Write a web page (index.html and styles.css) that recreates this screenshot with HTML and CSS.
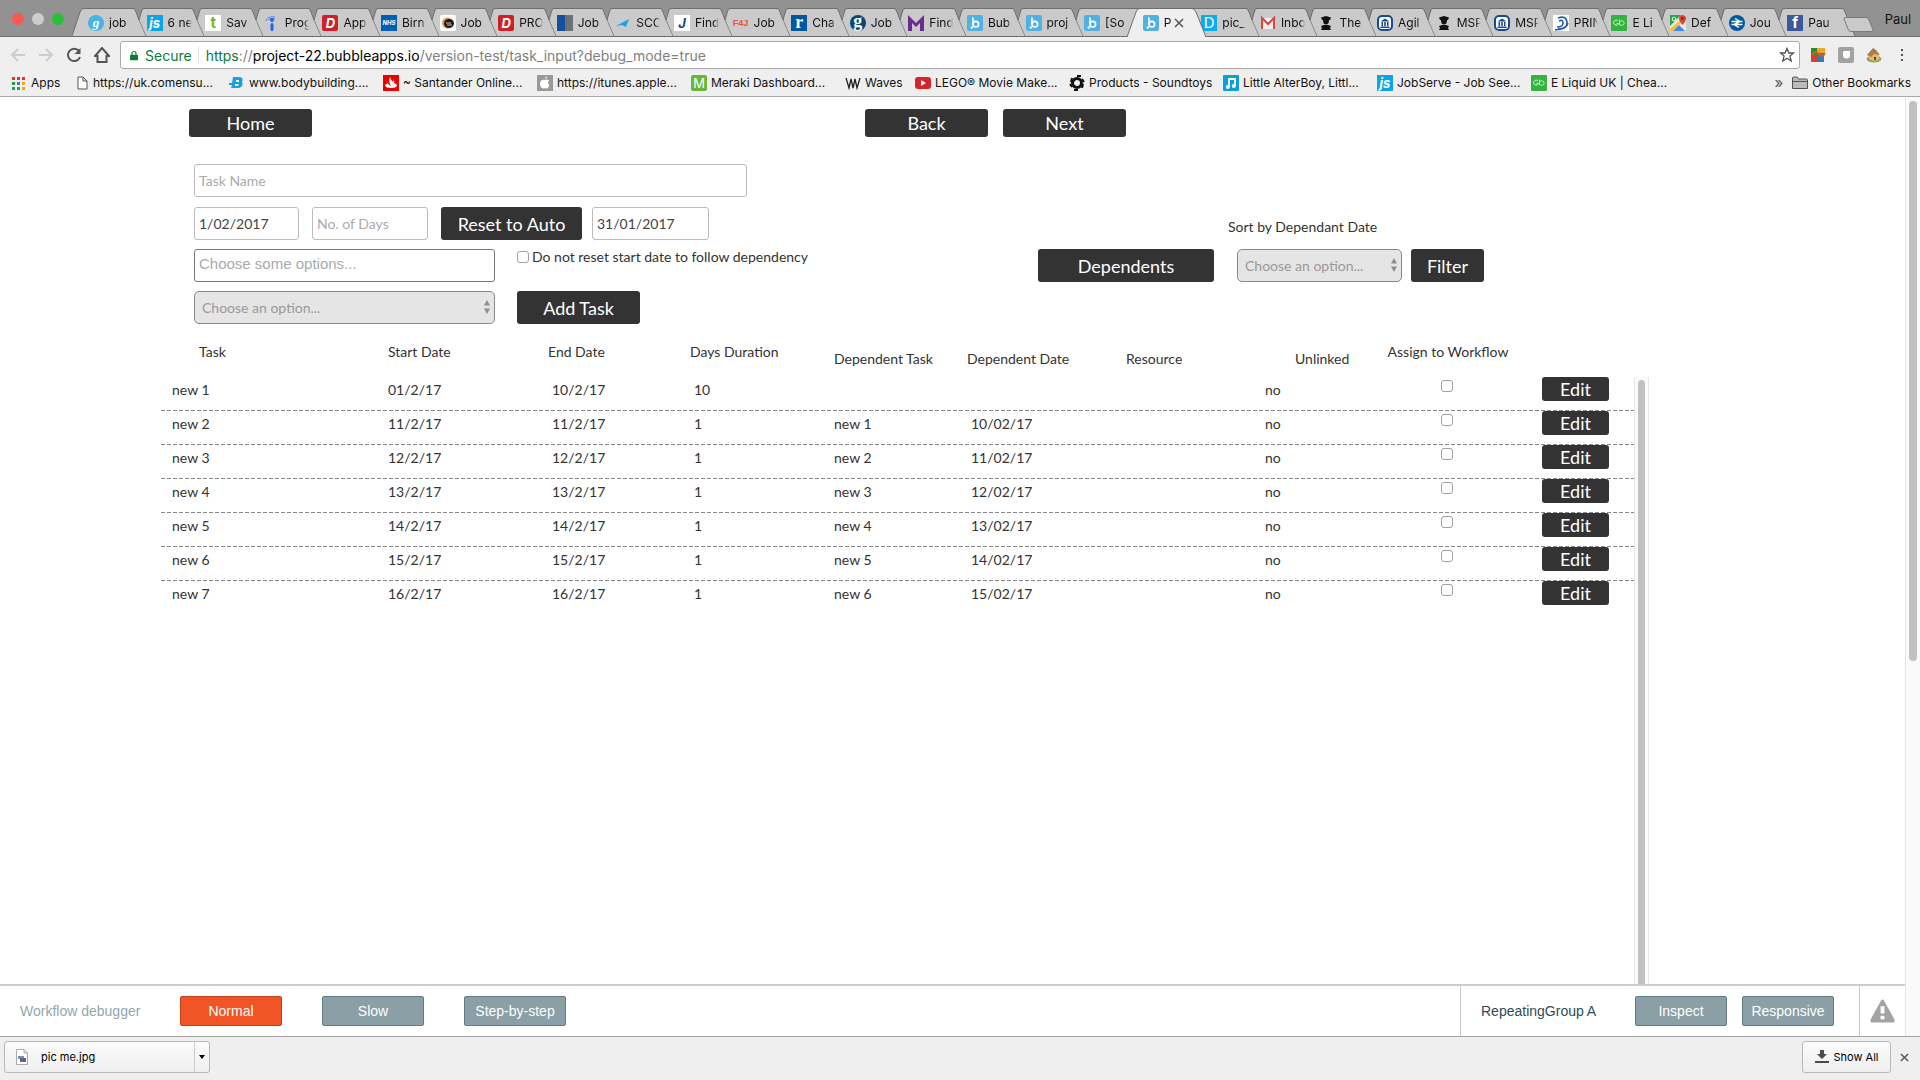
FILE: index.html
```
<!DOCTYPE html>
<html lang="en">
<head>
    <title>Project 22 - Task Input</title>
    <meta charset="UTF-8">
    <meta name="viewport" content="width=device-width, initial-scale=1.0">
    <link rel="stylesheet" href="styles.css">
</head>
<body>
    <!-- Shared icons -->
    <svg class="sprite" aria-hidden="true">
        <symbol id="notch" viewBox="0 0 14 28">
            <path d="M0 0Q2 1 3 4L6 12L8.500 4Q9 1 11 0Z" fill="#929292"/>
            <path d="M6 12L8.300 4Q9 .5 11 .5H14" fill="none" stroke="#6e6e6e"/>
            <path d="M0 .5Q2 .5 3 4L6 12" fill="none" stroke="#6e6e6e"/>
            <path d="M6 12L13 28" fill="none" stroke="#8a8a8a"/>
        </symbol>
        <symbol id="bubble" viewBox="0 0 16 16">
            <rect width="16" height="16" rx="2" fill="#52b1e4"/>
            <path d="M6 3V9" stroke="#fff" stroke-width="1.600" stroke-linecap="round"/>
            <circle cx="8.800" cy="9.200" r="2.800" fill="none" stroke="#fff" stroke-width="1.600"/>
            <circle cx="4.800" cy="12.500" r="1.200" fill="#fff"/>
        </symbol>
        <symbol id="grad" viewBox="0 0 16 16">
            <path d="M3 2.500L8 1L13 2.500L12 5H4ZM5 5H11Q11 9.500 8 9.500T5 5ZM3 15L4 13L3 11L6 10H10L13 11L12 13L13 15Z" fill="#111"/>
        </symbol>
        <symbol id="bank" viewBox="0 0 16 16">
            <rect x="1" y="1" width="14" height="14" rx="4" fill="#fff" stroke="#174a8c" stroke-width="2"/>
            <path d="M3.500 6.500L8 3.500L12.500 6.500ZM4.500 7H6V11H4.500ZM7.200 7H8.800V11H7.200ZM10 7H11.500V11H10ZM3.500 11.500H12.500V13H3.500Z" fill="#174a8c"/>
        </symbol>
        <symbol id="eliquid" viewBox="0 0 16 16">
            <rect width="16" height="16" rx="1" fill="#35b340"/>
            <path d="M7 6A2.500 2.500 0 1 0 7.500 8.500H5.500M8.500 4.500V10M8.500 8A2.300 2.300 0 1 1 9 9.500" fill="none" stroke="#c9f2c9"/>
        </symbol>
    </svg>

    <header class="browser">
        <div class="tab-strip">
            <div class="lights"><span class="light red"></span><span class="light grey"></span><span class="light green"></span></div>
            <svg class="tab-start" viewBox="0 0 12 28"><path d="M0 28L8 4Q9 .5 12 .5V28Z" fill="#cacaca"/><path d="M0 28L8 4Q9 .5 12 .5" fill="none" stroke="#6e6e6e"/></svg>
            <nav class="tabs">
                <a href="#" class="tab"><span class="fav round sky">g</span><span class="title">job</span></a>
                <a href="#" class="tab"><svg class="notch"><use href="#notch"/></svg><span class="fav js">js</span><span class="title">6 ne</span></a>
                <a href="#" class="tab"><svg class="notch"><use href="#notch"/></svg><span class="fav tot">t</span><span class="title">Sav</span></a>
                <a href="#" class="tab"><svg class="notch"><use href="#notch"/></svg><svg class="fav" viewBox="0 0 16 16"><path d="M1.500 6Q4 .5 11 2M4 5Q7 2 11 4" fill="none" stroke="#5b8cf5"/><circle cx="8" cy="5" r="2" fill="#2164f3"/><rect x="6.500" y="8" width="3" height="8" rx="1.500" fill="#2164f3"/></svg><span class="title">Prog</span></a>
                <a href="#" class="tab"><svg class="notch"><use href="#notch"/></svg><span class="fav dred">D</span><span class="title">App</span></a>
                <a href="#" class="tab"><svg class="notch"><use href="#notch"/></svg><span class="fav nhs">NHS</span><span class="title">Birn</span></a>
                <a href="#" class="tab"><svg class="notch"><use href="#notch"/></svg><svg class="fav" viewBox="0 0 16 16"><rect width="16" height="16" rx="2" fill="#fff"/><circle cx="7.500" cy="8" r="5.500" fill="#e09a4a"/><ellipse cx="9" cy="8.500" rx="5" ry="4.500" fill="#1a1a1a"/><path d="M6 8H11M7 10H12" stroke="#ccc"/></svg><span class="title">Job</span></a>
                <a href="#" class="tab"><svg class="notch"><use href="#notch"/></svg><span class="fav dred">D</span><span class="title">PRO</span></a>
                <a href="#" class="tab"><svg class="notch"><use href="#notch"/></svg><svg class="fav" viewBox="0 0 16 16"><path d="M0 0H8V16H0Z" fill="#1450a0"/><path d="M8 0H16V16H8Z" fill="#6d7075"/></svg><span class="title">Job</span></a>
                <a href="#" class="tab"><svg class="notch"><use href="#notch"/></svg><svg class="fav" viewBox="0 0 16 16"><path d="M1 11L14 4L11 12L7 10Z" fill="#18a4e8"/></svg><span class="title">SCO</span></a>
                <a href="#" class="tab"><svg class="notch"><use href="#notch"/></svg><span class="fav jay">J</span><span class="title">Find</span></a>
                <a href="#" class="tab"><svg class="notch"><use href="#notch"/></svg><span class="fav f4j">F4J</span><span class="title">Job</span></a>
                <a href="#" class="tab"><svg class="notch"><use href="#notch"/></svg><span class="fav reed">r</span><span class="title">Cha</span></a>
                <a href="#" class="tab"><svg class="notch"><use href="#notch"/></svg><span class="fav round guardian">g</span><span class="title">Job</span></a>
                <a href="#" class="tab"><svg class="notch"><use href="#notch"/></svg><svg class="fav" viewBox="0 0 16 16"><path d="M0 16V0L8 8L16 0V16H12V8L8 12L4 8V16Z" fill="#692d91"/></svg><span class="title">Find</span></a>
                <a href="#" class="tab"><svg class="notch"><use href="#notch"/></svg><svg class="fav"><use href="#bubble"/></svg><span class="title">Bub</span></a>
                <a href="#" class="tab"><svg class="notch"><use href="#notch"/></svg><svg class="fav"><use href="#bubble"/></svg><span class="title">proj</span></a>
                <a href="#" class="tab"><svg class="notch"><use href="#notch"/></svg><svg class="fav"><use href="#bubble"/></svg><span class="title">[So</span></a>
                <a href="#" class="tab active">
                    <svg class="shape" viewBox="0 0 80 29" preserveAspectRatio="none"><path d="M0 29L9 4Q10 .5 13 .5H65Q67 .5 69 4L79 29Z" fill="#efefef"/><path d="M0 29L9 4Q10 .5 13 .5H65Q67 .5 69 4L79 29" fill="none" stroke="#6e6e6e"/></svg>
                    <svg class="fav"><use href="#bubble"/></svg><span class="title short">P</span>
                    <svg class="close" viewBox="0 0 10 10"><path d="M1 1L9 9M9 1L1 9" stroke="#555" stroke-width="1.500"/></svg>
                </a>
                <a href="#" class="tab"><span class="fav dblue">D</span><span class="title">pic_</span></a>
                <a href="#" class="tab"><svg class="notch"><use href="#notch"/></svg><svg class="fav" viewBox="0 0 16 16"><path d="M1 3H15V14H1Z" fill="#eee"/><path d="M2 14V3L8 9L14 3V14" fill="none" stroke="#d54b3d" stroke-width="2"/></svg><span class="title">Inbo</span></a>
                <a href="#" class="tab"><svg class="notch"><use href="#notch"/></svg><svg class="fav"><use href="#grad"/></svg><span class="title">The</span></a>
                <a href="#" class="tab"><svg class="notch"><use href="#notch"/></svg><svg class="fav"><use href="#bank"/></svg><span class="title">Agil</span></a>
                <a href="#" class="tab"><svg class="notch"><use href="#notch"/></svg><svg class="fav"><use href="#grad"/></svg><span class="title">MSP</span></a>
                <a href="#" class="tab"><svg class="notch"><use href="#notch"/></svg><svg class="fav"><use href="#bank"/></svg><span class="title">MSP</span></a>
                <a href="#" class="tab"><svg class="notch"><use href="#notch"/></svg><svg class="fav" viewBox="0 0 16 16"><rect width="16" height="16" fill="#fff"/><path d="M5 3Q13 0 14 7T5 14M6 6Q10 4 10 8T4 12M2 15Q14 14 15 8" fill="none" stroke="#2a5caa" stroke-width="1.600"/></svg><span class="title">PRIN</span></a>
                <a href="#" class="tab"><svg class="notch"><use href="#notch"/></svg><svg class="fav"><use href="#eliquid"/></svg><span class="title">E Li</span></a>
                <a href="#" class="tab"><svg class="notch"><use href="#notch"/></svg><svg class="fav" viewBox="0 0 16 16"><rect width="16" height="16" rx="1" fill="#e8e8e8"/><path d="M0 0H11L0 11Z" fill="#2ba24c"/><path d="M0 14L9 6L11 8L3 16H0Z" fill="#fbc02d"/><path d="M3 16L9 10L15 16Z" fill="#4285f4"/><circle cx="4" cy="4" r="1.800" fill="none" stroke="#fff"/><path d="M12.500 10Q9 6 9 3.500A3.500 3.500 0 0 1 16 3.500Q16 6 12.500 10Z" fill="#db4437"/><circle cx="12.500" cy="3.500" r="1.200" fill="#7b1f17"/></svg><span class="title">Def</span></a>
                <a href="#" class="tab"><svg class="notch"><use href="#notch"/></svg><svg class="fav" viewBox="0 0 16 16"><circle cx="8" cy="8" r="8" fill="#00599c"/><path d="M2.500 6.500H13.500M2.500 9.500H13.500M6 3.500L11 6.500L5 9.500L10 12.500" fill="none" stroke="#fff" stroke-width="1.400"/></svg><span class="title">Jou</span></a>
                <a href="#" class="tab"><svg class="notch"><use href="#notch"/></svg><span class="fav fb">f</span><span class="title">Pau</span></a>
            </nav>
            <svg class="tab-end" viewBox="0 0 34 28"><path d="M0 .5Q2 .5 3 4L13 28H0Z" fill="#cacaca"/><path d="M0 .5Q2 .5 3 4L13 28" fill="none" stroke="#6e6e6e"/><path d="M3 9.500H24Q26 9.500 27 12L31 22Q31 23.500 29 23.500H9Q7 23.500 6 21L2 11Q2 9.500 3 9.500Z" fill="#cacaca" stroke="#7a7a7a"/></svg>
            <span class="profile">Paul</span>
        </div>

        <div class="toolbar">
            <button class="tool" aria-label="Back"><svg viewBox="0 0 16 16"><path d="M15 8H2M8 2L2 8L8 14" stroke="#ccc"/></svg></button>
            <button class="tool" aria-label="Forward"><svg viewBox="0 0 16 16"><path d="M1 8H14M8 2L14 8L8 14" stroke="#ccc"/></svg></button>
            <button class="tool" aria-label="Reload"><svg viewBox="0 0 16 16"><path d="M13 4A6.200 6.200 0 1 0 14 10" stroke="#555"/><path d="M14.500 1V7H8.500Z" fill="#555" stroke="none"/></svg></button>
            <button class="tool" aria-label="Home"><svg viewBox="0 0 16 16"><path d="M1 9L8 1L15 9H12.500V15H3.500V9Z" stroke="#555"/></svg></button>
            <div class="omnibox">
                <svg class="lock" viewBox="0 0 10 12"><path d="M1 5H9Q10 5 10 6V11Q10 12 9 12H1Q0 12 0 11V6Q0 5 1 5Z" fill="#0b7b3b"/><path d="M2.500 5V3.500A2.500 2.500 0 0 1 7.500 3.500V5" fill="none" stroke="#0b7b3b" stroke-width="1.500"/></svg>
                <span class="secure">Secure</span>
                <span class="url"><span class="scheme">https</span>://<span class="host">project-22.bubbleapps.io</span>/version-test/task_input?debug_mode=true</span>
                <svg class="star" viewBox="0 0 16 16"><path d="M8 1.500L9.900 6H14.500L10.900 9L12.200 14L8 11.200L3.800 14L5.100 9L1.500 6H6.100Z" fill="none" stroke="#555" stroke-width="1.300"/></svg>
            </div>
            <button class="tool" aria-label="Picture extension"><svg viewBox="0 0 16 16"><path d="M1 1H7V8H1Z" fill="#2a8a3a" stroke="none"/><path d="M7 1H15V8H7Z" fill="#e8a82a" stroke="none"/><path d="M1 8H7V15H1Z" fill="#d8402a" stroke="none"/><path d="M7 6H14V15H7Z" fill="#2a7fc0" stroke="none"/><path d="M2 8Q5 3 9 7T15 6" stroke="#e55a1c"/></svg></button>
            <button class="tool" aria-label="Grey extension"><svg viewBox="0 0 16 16"><rect width="16" height="16" rx="2" fill="#a2a2a2" stroke="none"/><path d="M5 5Q5 4 7 4H12V8A3.500 3.500 0 0 1 5 8Z" fill="#fff" stroke="none"/></svg></button>
            <button class="tool" aria-label="House extension"><svg viewBox="0 0 16 16"><ellipse cx="8" cy="12" rx="7.500" ry="3.500" fill="#93a64c" stroke="none"/><path d="M3 7L9 5L13 8V13L7 14L3 12Z" fill="#e2b878" stroke="none"/><path d="M1 8L7 1L10 3L14 8L8 7L5 10Z" fill="#b07a45" stroke="none"/><path d="M8 10H10V13H8Z" fill="#704820" stroke="none"/></svg></button>
            <button class="tool" aria-label="Menu"><svg viewBox="0 0 16 16"><path d="M7 2H9V4H7ZM7 7H9V9H7ZM7 12H9V14H7Z" fill="#555" stroke="none"/></svg></button>
        </div>

        <nav class="bookmarks">
            <a href="#" class="bookmark apps"><svg class="fav" viewBox="0 0 16 16"><path d="M1 2H4V5H1ZM6 2H9V5H6ZM11 2H14V5H11Z" fill="#e5322d"/><path d="M1 7H4V10H1ZM1 12H4V15H1ZM6 12H9V15H6Z" fill="#2a9d4a"/><path d="M6 7H9V10H6Z" fill="#3b78e7"/><path d="M11 7H14V10H11ZM11 12H14V15H11Z" fill="#f4a61c"/></svg>Apps</a>
            <a href="#" class="bookmark page-link"><svg class="fav narrow" viewBox="0 0 12 16"><path d="M1 2H6L10 6V14H1ZM6 2V6H10" fill="#fff" stroke="#555"/></svg>https://uk.comensu...</a>
            <a href="#" class="bookmark"><svg class="fav" viewBox="0 0 16 16"><path d="M4 2H11Q15 3 13 7Q15 11 10 13H2L3 10H0V8H3ZM7 5V7H10V5ZM6 9V11H9L10 9Z" fill="#18a0e0" fill-rule="evenodd"/></svg>www.bodybuilding....</a>
            <a href="#" class="bookmark"><svg class="fav" viewBox="0 0 16 16"><rect width="16" height="16" fill="#ec0000"/><path d="M7 2Q8 5 10 7Q11 6 10 4Q12 6 11 8Q14 9 14 10.500Q13 13 8 13T2 10.500Q2 9 5 8.500Q6 10 8 11Q5 6 7 2Z" fill="#fff"/></svg>~ Santander Online...</a>
            <a href="#" class="bookmark"><svg class="fav" viewBox="0 0 16 16"><rect width="16" height="16" fill="#999"/><path d="M8 5Q10 4 12 5.500Q10 8 12.500 10Q11 14 9.500 13.500T6.500 13.500Q3 13 3 8Q4 4 8 5ZM8 4Q8 2 10 1Q10 3.500 8 4Z" fill="#fff"/></svg>https://itunes.apple...</a>
            <a href="#" class="bookmark"><span class="fav meraki">M</span>Meraki Dashboard...</a>
            <a href="#" class="bookmark waves"><svg class="fav" viewBox="0 0 16 16"><path d="M1 3L4 13L6 4L8 13L10 4L12 13L15 3" fill="none" stroke="#222" stroke-width="1.300"/></svg>Waves</a>
            <a href="#" class="bookmark"><svg class="fav" viewBox="0 0 16 16"><rect y="2" width="16" height="12" rx="3" fill="#d8232a"/><path d="M6 5L11 8L6 11Z" fill="#fff"/></svg>LEGO® Movie Make...</a>
            <a href="#" class="bookmark"><svg class="fav" viewBox="0 0 16 16"><circle cx="8" cy="8" r="4.500" fill="none" stroke="#111" stroke-width="3"/><path d="M8 1L12 1M13 4L15 7M14 9L13 13M9 15L5 15M3 12L1 9M2 7L3 3" stroke="#111" stroke-width="2"/></svg>Products - Soundtoys</a>
            <a href="#" class="bookmark"><svg class="fav" viewBox="0 0 16 16"><rect width="16" height="16" rx="1" fill="#0c9fe0"/><path d="M6 12V4H12V11" fill="none" stroke="#fff" stroke-width="1.800"/><circle cx="4.800" cy="12" r="2" fill="#fff"/><circle cx="10.800" cy="11" r="2" fill="#fff"/></svg>Little AlterBoy, Littl...</a>
            <a href="#" class="bookmark"><span class="fav js">js</span>JobServe - Job See...</a>
            <a href="#" class="bookmark"><svg class="fav"><use href="#eliquid"/></svg>E Liquid UK | Chea...</a>
            <span class="more">»</span>
            <a href="#" class="bookmark other"><svg class="fav" viewBox="0 0 16 16"><path d="M.5 13.500V3Q.5 2 1.500 2H5L6.500 4H14.500Q15.500 4 15.500 5V13.500ZM.5 6.500H15.500" fill="#bbb" stroke="#555"/></svg>Other Bookmarks</a>
        </nav>
    </header>

    <div class="viewport">
        <div class="page">
            <main class="content">
                <div class="nav-row">
                    <button class="btn">Home</button>
                    <div class="nav-pair">
                        <button class="btn">Back</button>
                        <button class="btn">Next</button>
                    </div>
                </div>

                <div class="form-area">
                    <form class="task-form">
                        <input class="field" type="text" placeholder="Task Name" aria-label="Task Name">
                        <div class="form-row dates">
                            <input class="field start" type="text" value="1/02/2017" aria-label="Start date">
                            <input class="field days" type="text" placeholder="No. of Days" aria-label="No. of Days">
                            <button class="btn reset" type="button">Reset to Auto</button>
                            <input class="field end" type="text" value="31/01/2017" aria-label="End date">
                        </div>
                        <div class="form-row">
                            <input class="field multi" type="text" placeholder="Choose some options..." aria-label="Dependent tasks">
                            <label class="check-label"><input class="check" type="checkbox">Do not reset start date to follow dependency</label>
                        </div>
                        <div class="form-row">
                            <div class="select">
                                <select aria-label="Resource"><option>Choose an option...</option></select>
                                <svg class="arrows" viewBox="0 0 8 14"><path d="M1 5.500L4 0L7 5.500ZM1 8.500L4 14L7 8.500Z" fill="#8e8e8e"/></svg>
                            </div>
                            <button class="btn" type="button">Add Task</button>
                        </div>
                    </form>

                    <div class="filters">
                        <label class="sort-label" for="sort">Sort by Dependant Date</label>
                        <button class="btn dependents">Dependents</button>
                        <div class="select sort">
                            <select id="sort"><option>Choose an option...</option></select>
                            <svg class="arrows" viewBox="0 0 8 14"><path d="M1 5.500L4 0L7 5.500ZM1 8.500L4 14L7 8.500Z" fill="#8e8e8e"/></svg>
                        </div>
                        <button class="btn filter">Filter</button>
                    </div>
                </div>

                <div class="task-group">
                    <table>
                        <thead>
                            <tr>
                                <th class="task">Task</th>
                                <th class="start">Start Date</th>
                                <th class="end">End Date</th>
                                <th class="days">Days Duration</th>
                                <th class="dep-task low">Dependent Task</th>
                                <th class="dep-date low">Dependent Date</th>
                                <th class="resource low">Resource</th>
                                <th class="unlinked low">Unlinked</th>
                                <th class="assign">Assign to Workflow</th>
                                <th class="action"></th>
                            </tr>
                        </thead>
                        <tbody>
                            <tr><td>new 1</td><td>01/2/17</td><td>10/2/17</td><td>10</td><td></td><td></td><td></td><td>no</td><td class="center"><input class="check" type="checkbox" aria-label="Assign new 1"></td><td class="center"><button class="btn edit">Edit</button></td></tr>
                            <tr><td>new 2</td><td>11/2/17</td><td>11/2/17</td><td>1</td><td>new 1</td><td class="dep">10/02/17</td><td></td><td>no</td><td class="center"><input class="check" type="checkbox" aria-label="Assign new 2"></td><td class="center"><button class="btn edit">Edit</button></td></tr>
                            <tr><td>new 3</td><td>12/2/17</td><td>12/2/17</td><td>1</td><td>new 2</td><td class="dep">11/02/17</td><td></td><td>no</td><td class="center"><input class="check" type="checkbox" aria-label="Assign new 3"></td><td class="center"><button class="btn edit">Edit</button></td></tr>
                            <tr><td>new 4</td><td>13/2/17</td><td>13/2/17</td><td>1</td><td>new 3</td><td class="dep">12/02/17</td><td></td><td>no</td><td class="center"><input class="check" type="checkbox" aria-label="Assign new 4"></td><td class="center"><button class="btn edit">Edit</button></td></tr>
                            <tr><td>new 5</td><td>14/2/17</td><td>14/2/17</td><td>1</td><td>new 4</td><td class="dep">13/02/17</td><td></td><td>no</td><td class="center"><input class="check" type="checkbox" aria-label="Assign new 5"></td><td class="center"><button class="btn edit">Edit</button></td></tr>
                            <tr><td>new 6</td><td>15/2/17</td><td>15/2/17</td><td>1</td><td>new 5</td><td class="dep">14/02/17</td><td></td><td>no</td><td class="center"><input class="check" type="checkbox" aria-label="Assign new 6"></td><td class="center"><button class="btn edit">Edit</button></td></tr>
                            <tr><td>new 7</td><td>16/2/17</td><td>16/2/17</td><td>1</td><td>new 6</td><td class="dep">15/02/17</td><td></td><td>no</td><td class="center"><input class="check" type="checkbox" aria-label="Assign new 7"></td><td class="center"><button class="btn edit">Edit</button></td></tr>
                        </tbody>
                    </table>
                    <div class="group-scroll"><div class="thumb"></div></div>
                </div>
            </main>

            <footer class="debugger">
                <span class="debug-title">Workflow debugger</span>
                <div class="speeds">
                    <button class="debug-btn on">Normal</button>
                    <button class="debug-btn">Slow</button>
                    <button class="debug-btn">Step-by-step</button>
                </div>
                <div class="inspector">
                    <span class="element">RepeatingGroup A</span>
                    <button class="debug-btn small">Inspect</button>
                    <button class="debug-btn small">Responsive</button>
                </div>
                <div class="issues"><svg viewBox="0 0 26 24"><path d="M11.500 1Q13 -1 14.500 1L25.500 21Q26 24 24 24H2Q0 24 .5 21Z" fill="#a3a3a3"/><path d="M11 7H15V14.500H11ZM11 17H15V20.500H11Z" fill="#fff"/></svg></div>
            </footer>
        </div>
        <div class="page-scroll"><div class="thumb"></div></div>
    </div>

    <div class="downloads">
        <div class="download">
            <button class="file"><svg viewBox="0 0 12 16"><path d="M.5 .5H8L11.500 4V15.500H.5ZM8 .5V4H11.500" fill="#fff" stroke="#aaa"/><path d="M2 7H8V10H2Z" fill="#6b93c8"/><path d="M4 9H10V13H4Z" fill="#667"/></svg>pic me.jpg</button>
            <button class="drop" aria-label="Download options"><svg viewBox="0 0 6 4"><path d="M0 0H6L3 4Z" fill="#000"/></svg></button>
        </div>
        <div class="shelf-right">
            <button class="show-all"><svg viewBox="0 0 14 14"><path d="M5 0H9V4H12L7 9L2 4H5ZM0 11H14V13H0Z" fill="#4a4a4a"/></svg>Show All</button>
            <button class="shelf-close" aria-label="Close"><svg viewBox="0 0 10 10"><path d="M1 1L9 9M9 1L1 9" stroke="#555" stroke-width="1.600"/></svg></button>
        </div>
    </div>
</body>
</html>
```
FILE: styles.css
```
* { box-sizing: border-box; }
body {
    margin: 0;
    min-height: 100vh;
    display: flex;
    flex-direction: column;
    background: #fff;
    font-family: Lato, sans-serif;
    font-size: 14px;
    color: #333;
}
button, input, select { font-family: inherit; font-size: inherit; margin: 0; }
button { padding: 0; border: none; background: none; }
a { color: inherit; text-decoration: none; }
svg { display: block; flex: none; }
.sprite { position: absolute; width: 0; height: 0; }

/* Browser window */
.browser {
    font-family: Inter, sans-serif;
    color: #111;
    background: #efefef;
    border-bottom: 1px solid #a9a9a9;
}
.tab-strip {
    display: flex;
    height: 37px;
    padding-top: 8px;
    background: #929292;
    border-bottom: 1px solid #6e6e6e;
}
.lights {
    display: flex;
    gap: 8px;
    width: 72px;
    padding: 5px 0 0 12px;
}
.light { width: 12px; height: 12px; border-radius: 50%; }
.red { background: #fc5850; }
.grey { background: #cdcdcd; }
.green { background: #28c038; }
.tab-start { width: 12px; height: 28px; }
.tab-end { width: 34px; height: 28px; }
.tabs { display: flex; flex: 1; }
.tab {
    position: relative;
    display: flex;
    align-items: center;
    flex: 1;
    min-width: 0;
    height: 28px;
    padding-left: 4px;
    background: #cacaca;
    border-top: 1px solid #6e6e6e;
    font-size: 12px;
}
.notch {
    position: absolute;
    left: -10px;
    top: -1px;
    width: 14px;
    height: 28px;
}
.title {
    width: 24px;
    margin-left: 5px;
    overflow: hidden;
    white-space: nowrap;
    -webkit-mask-image: linear-gradient(to right, #000 80%, transparent);
    mask-image: linear-gradient(to right, #000 80%, transparent);
}
.title.short { width: 8px; }
.tab.active { z-index: 1; }
.tab.active > * { position: relative; }
.tab.active .shape {
    position: absolute;
    left: -12px;
    top: -1px;
    width: 80px;
    height: 29px;
}
.close { width: 10px; height: 10px; margin-left: 2px; }
.profile { width: 44px; padding-top: 3px; text-align: center; font-size: 13px; }

.fav {
    width: 16px;
    height: 16px;
    flex: none;
    text-align: center;
    font-size: 13px;
    line-height: 16px;
    font-weight: bold;
    color: #fff;
}
.fav.narrow { width: 12px; }
.round { border-radius: 50%; }
.sky { background: #46b5e6; font-family: "Liberation Serif", serif; font-style: italic; }
.js { background: #0aa5e8; font-style: italic; }
.tot { background: #fff; color: #6fb81c; font-size: 15px; }
.dred { background: #cf2029; border-radius: 2px; font-style: italic; }
.nhs { background: #005eb8; font-size: 6px; font-style: italic; }
.jay { background: #fff; color: #0a4a8c; font-style: italic; }
.f4j { color: #e8543a; font-family: "Liberation Sans", sans-serif; font-size: 9px; }
.reed { background: #0058a0; font-family: "Liberation Serif", serif; font-size: 18px; line-height: 14px; }
.guardian { background: #0c4578; font-family: "Liberation Serif", serif; font-size: 18px; line-height: 12px; }
.dblue { background: #0aaef0; font-weight: normal; font-size: 15px; }
.fb { background: #3b5998; font-size: 15px; }
.meraki { background: #67b83a; font-weight: normal; border-radius: 2px; }

.toolbar {
    display: flex;
    align-items: center;
    height: 36px;
    padding: 0 4px;
}
.tool {
    width: 28px;
    height: 28px;
    display: flex;
    align-items: center;
    justify-content: center;
}
.tool svg { width: 16px; height: 16px; fill: none; stroke-width: 2; }
.omnibox {
    flex: 1;
    display: flex;
    align-items: center;
    height: 28px;
    margin: 0 4px;
    padding: 0 4px 0 9px;
    background: #fff;
    border: 1px solid #a9a9a9;
    border-radius: 3px;
    font-size: 14px;
}
.lock { width: 8px; height: 11px; }
.secure {
    margin-left: 7px;
    padding-right: 6px;
    border-right: 1px solid #e0e0e0;
    color: #0b7b3b;
}
.url { flex: 1; margin-left: 7px; color: #808080; }
.scheme { color: #0b7b3b; }
.host { color: #000; }
.star { width: 16px; height: 16px; }

.bookmarks {
    display: flex;
    align-items: center;
    height: 23px;
    padding: 0 9px 4px 11px;
    font-size: 12px;
    white-space: nowrap;
}
.bookmark { display: flex; align-items: center; gap: 4px; width: 154px; }
.bookmark.apps { width: 66px; }
.bookmark.page-link { width: 152px; }
.bookmark.waves { width: 70px; }
.bookmark.other { width: auto; }
.more { margin: 0 9px 0 auto; font-size: 15px; color: #555; }

/* Page */
.viewport { flex: 1; display: flex; }
.page { flex: 1; display: flex; flex-direction: column; min-width: 0; }
.page-scroll {
    width: 15px;
    padding: 4px 3px;
    background: #fafafa;
    border-left: 1px solid #e6e6e6;
}
.thumb { background: #c1c1c1; border-radius: 4px; }
.page-scroll .thumb { height: 560px; }
.content {
    flex: 1;
    display: flex;
    flex-direction: column;
    padding: 12px 256px 0 161px;
}
.btn {
    width: 123px;
    height: 33px;
    background: #333;
    color: #fff;
    border-radius: 3px;
    font-size: 18px;
}
.nav-row { display: flex; padding-left: 28px; }
.nav-row .btn { height: 28px; }
.nav-pair { display: flex; gap: 15px; margin-left: 553px; }

.form-area { display: flex; margin-top: 27px; padding-left: 33px; }
.task-form { width: 640px; display: flex; flex-direction: column; gap: 9px; }
.form-row { display: flex; gap: 22px; }
.form-row.dates { gap: 13px; margin-top: 1px; }
.field {
    width: 553px;
    height: 33px;
    padding: 0 4px;
    background: #fff;
    border: 1px solid #bbb;
    border-radius: 3px;
    color: #444;
}
.field::placeholder { color: #aaa; }
.field.start { width: 105px; }
.field.days { width: 116px; }
.field.end { width: 117px; margin-left: -3px; }
.btn.reset { width: 141px; }
.field.multi {
    width: 301px;
    border-color: #777;
    padding-bottom: 4px;
    font-family: "Liberation Sans", sans-serif;
    font-size: 15px;
}
.check {
    appearance: none;
    width: 12px;
    height: 12px;
    background: #fff;
    border: 1px solid #a0a0a0;
    border-radius: 3px;
}
.check-label { display: flex; gap: 3px; line-height: 16px; }
.check-label .check { margin-top: 2px; }
.select { position: relative; width: 301px; height: 33px; }
.select select {
    appearance: none;
    width: 100%;
    height: 33px;
    padding: 0 7px;
    background: #e5e5e5;
    border: 1px solid #888;
    border-radius: 5px;
    color: #999;
}
.arrows { position: absolute; right: 4px; top: 9px; width: 8px; height: 14px; }

.filters {
    display: grid;
    grid-template-columns: 181px 174px 73px;
    column-gap: 9px;
    row-gap: 13px;
    align-content: start;
    margin-left: 204px;
    padding-top: 54px;
}
.sort-label { grid-column: 2 / 4; line-height: 18px; }
.btn.dependents { width: 176px; }
.select.sort { width: 165px; margin-left: 9px; }
.btn.filter { width: 73px; }

.task-group { flex: 1; display: flex; margin-top: 17px; }
table {
    flex: 1;
    width: 0;
    align-self: flex-start;
    table-layout: fixed;
    border-collapse: separate;
    border-spacing: 0;
}
th {
    height: 36px;
    padding: 2px 0 0 12px;
    vertical-align: top;
    text-align: left;
    font-weight: normal;
    line-height: 18px;
    white-space: nowrap;
}
th.task { width: 215px; padding-left: 38px; }
th.start { width: 164px; }
th.end { width: 142px; padding-left: 8px; }
th.days { width: 140px; padding-left: 8px; }
th.dep-task { width: 133px; }
th.dep-date { width: 159px; }
th.resource { width: 139px; }
th.unlinked { width: 123px; padding-left: 42px; }
th.assign { width: 141px; padding-left: 3px; text-align: center; }
th.low { padding-top: 9px; }
td {
    height: 34px;
    padding: 0 0 0 12px;
    vertical-align: top;
    line-height: 26px;
}
td:first-child { padding-left: 11px; }
/* One unbroken dashed rule under each row */
tbody tr {
    background: repeating-linear-gradient(to right, #888 0, #888 4px, transparent 4px, transparent 6px) left bottom / 100% 1px no-repeat;
}
tbody tr:last-child { background: none; }
td.dep { padding-left: 16px; }
td.center { padding-left: 0; text-align: center; }
td .check { display: block; margin: 3px auto 0; }
.btn.edit { display: block; width: 67px; height: 24px; margin: 0 auto; }
.group-scroll {
    width: 15px;
    margin-top: 36px;
    padding: 3px 3px 0;
    display: flex;
    background: #fafafa;
    border-left: 1px solid #e6e6e6;
    border-right: 1px solid #e6e6e6;
}
.group-scroll .thumb { flex: 1; border-radius: 4px 4px 0 0; }

/* Debugger bar */
.debugger {
    display: flex;
    align-items: center;
    height: 52px;
    padding-left: 20px;
    border-top: 2px solid #ccc;
    font-family: "Liberation Sans", sans-serif;
}
.debug-title { width: 160px; color: #94a6ad; }
.speeds { display: flex; gap: 40px; }
.debug-btn {
    width: 102px;
    height: 30px;
    background: #8a9fa6;
    border: 1px solid #5f7b83;
    border-radius: 2px;
    color: #fff;
}
.debug-btn.on { background: #f15525; border-color: #c0431c; }
.debug-btn.small { width: 92px; }
.inspector {
    display: flex;
    align-items: center;
    gap: 15px;
    height: 50px;
    margin-left: auto;
    padding: 0 25px 0 20px;
    border-left: 1px solid #ccc;
}
.element { width: 139px; color: #2f4b58; }
.issues {
    display: flex;
    align-items: center;
    height: 50px;
    padding: 0 10px;
    border-left: 1px solid #ccc;
}
.issues svg { width: 25px; height: 24px; }

/* Download shelf */
.downloads {
    display: flex;
    justify-content: space-between;
    height: 44px;
    padding: 4px 11px 0 4px;
    background: #efefef;
    border-top: 1px solid #a5a5a5;
    font-family: Inter, sans-serif;
    font-size: 11px;
}
.download, .show-all {
    display: flex;
    height: 32px;
    background: linear-gradient(#fbfbfb, #efefef);
    border: 1px solid #b8b8b8;
    border-radius: 3px;
    color: #000;
}
.download { width: 206px; }
.file { flex: 1; display: flex; align-items: center; gap: 13px; padding-left: 11px; color: #000; }
.file svg { width: 12px; height: 16px; }
.drop { width: 15px; display: flex; align-items: center; justify-content: center; border-left: 1px solid #ccc; }
.drop svg { width: 6px; height: 4px; }
.shelf-right { display: flex; gap: 9px; }
.show-all { width: 89px; align-items: center; justify-content: center; gap: 5px; }
.show-all svg { width: 14px; height: 14px; }
.shelf-close { height: 32px; }
.shelf-close svg { width: 9px; height: 9px; }
```
